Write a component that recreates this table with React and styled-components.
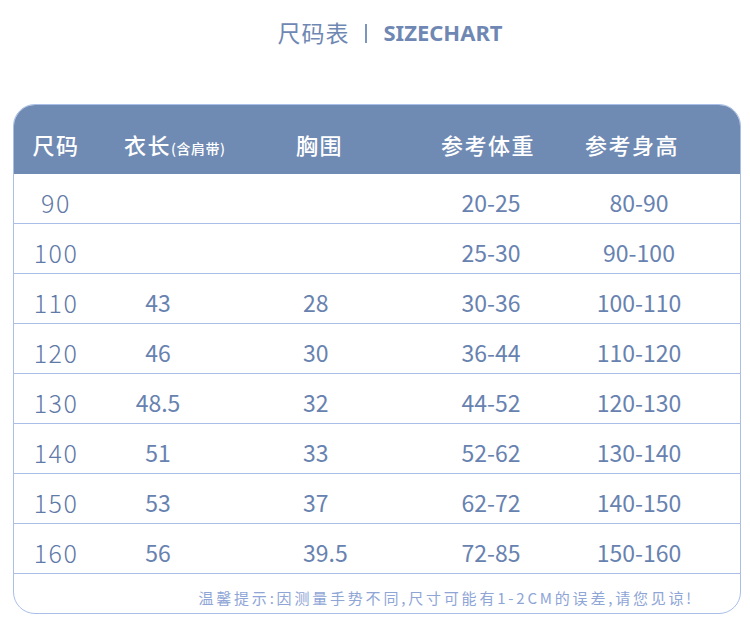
import React from 'react';
import styled, { createGlobalStyle } from 'styled-components';

const rows = [
  ['90', '', '', '20-25', '80-90'],
  ['100', '', '', '25-30', '90-100'],
  ['110', '43', '28', '30-36', '100-110'],
  ['120', '46', '30', '36-44', '110-120'],
  ['130', '48.5', '32', '44-52', '120-130'],
  ['140', '51', '33', '52-62', '130-140'],
  ['150', '53', '37', '62-72', '140-150'],
  ['160', '56', '39.5', '72-85', '150-160'],
];

const App = () => {
  return (
    <Page>
      <GlobalStyle />
      <Title>
        <span>尺码表</span>
        <Divider />
        <strong>SIZECHART</strong>
      </Title>
      <Card>
        <HeadRow>
          <HeadCell>尺码</HeadCell>
          <HeadCell $align="left" $pad="26px">
            衣长<small>(含肩带)</small>
          </HeadCell>
          <HeadCell $align="left" $pad="78px">胸围</HeadCell>
          <HeadCell $shift="-6px">参考体重</HeadCell>
          <HeadCell $shift="-10px">参考身高</HeadCell>
        </HeadRow>
        {rows.map((row) => (
          <Row key={row[0]}>
            <SizeCell>{row[0]}</SizeCell>
            <Cell>{row[1]}</Cell>
            <Cell $align="left" $pad="85px">{row[2]}</Cell>
            <Cell>{row[3]}</Cell>
            <Cell $shift="4px">{row[4]}</Cell>
          </Row>
        ))}
        <Note>温馨提示:因测量手势不同,尺寸可能有1-2CM的误差,请您见谅!</Note>
      </Card>
    </Page>
  );
};

export default App;

const GlobalStyle = createGlobalStyle`
  body {
    margin: 0;
    background: #fff;
    font-family: "Noto Sans CJK SC", "Noto Sans", sans-serif;
  }
`;

const Page = styled.div`
  width: 750px;
  height: 633px;
  padding-top: 19px;
  box-sizing: border-box;
  overflow: hidden;
`;

const Title = styled.div`
  display: flex;
  align-items: center;
  justify-content: center;
  gap: 16px;
  padding-left: 30px;
  height: 26px;
  color: #6f88b3;
  & > span {
    font-size: 23px;
    letter-spacing: 1px;
  }
  & > strong {
    font-family: "Noto Sans", sans-serif;
    font-size: 22px;
    font-weight: 700;
  }
`;

const Divider = styled.i`
  display: block;
  width: 2px;
  height: 19px;
  margin-top: 2px;
  background: #7d94bd;
`;

const Card = styled.div`
  margin: 59px 9px 0 13px;
  border: 1px solid #a9bfe8;
  border-radius: 22px;
  overflow: hidden;
`;

const grid = `
  display: grid;
  grid-template-columns: 84px 120px 202px 142px 150px 1fr;
  align-items: center;
`;

const HeadRow = styled.div`
  ${grid}
  height: 69px;
  padding-top: 8px;
  box-sizing: border-box;
  background: #6f8ab3;
`;

const HeadCell = styled.div`
  text-align: ${(p) => p.$align || 'center'};
  padding-left: ${(p) => p.$pad || 0};
  margin-left: ${(p) => p.$shift || 0};
  white-space: nowrap;
  color: #fff;
  font-size: 22px;
  font-weight: 500;
  letter-spacing: 1.5px;
  & > small {
    font-size: 14px;
    font-weight: 500;
    letter-spacing: 0.5px;
  }
`;

const Row = styled.div`
  ${grid}
  height: 50px;
  padding-top: 7px;
  box-sizing: border-box;
  border-bottom: 1px solid #a9bfe8;
`;

const Cell = styled.div`
  text-align: ${(p) => p.$align || 'center'};
  padding-left: ${(p) => p.$pad || 0};
  margin-left: ${(p) => p.$shift || 0};
  white-space: nowrap;
  color: #6882b0;
  font-size: 23px;
  font-weight: 400;
`;

const SizeCell = styled(Cell)`
  color: #5f79a8;
  font-size: 25px;
  font-weight: 300;
  letter-spacing: 1.5px;
`;

const Note = styled.div`
  height: 39px;
  padding-right: 46px;
  text-align: right;
  line-height: 48px;
  color: #8ea5d6;
  font-size: 15px;
  letter-spacing: 2.8px;
`;
